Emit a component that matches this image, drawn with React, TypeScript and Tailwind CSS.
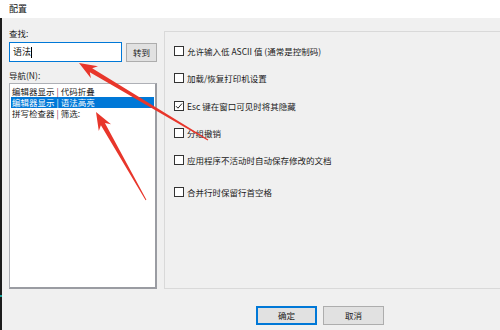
import React from "react";

type P = [number, number];

function arrowPoints(tip: P, tail: P): string {
  const [tx, ty] = tip;
  const [bx, by] = tail;
  const dx = tx - bx;
  const dy = ty - by;
  const len = Math.hypot(dx, dy);
  const ux = dx / len;
  const uy = dy / len;
  const px = -uy;
  const py = ux;
  const headLen = 18;
  const headW = 7;
  const neckW = 2.3;
  const tailW = 0.5;
  const barbIn = 4;
  const hx = tx - ux * headLen;
  const hy = ty - uy * headLen;
  const nx = tx - ux * (headLen - barbIn);
  const ny = ty - uy * (headLen - barbIn);
  const pts: P[] = [
    [tx, ty],
    [hx + px * headW, hy + py * headW],
    [nx + px * neckW, ny + py * neckW],
    [bx + px * tailW, by + py * tailW],
    [bx - px * tailW, by - py * tailW],
    [nx - px * neckW, ny - py * neckW],
    [hx - px * headW, hy - py * headW],
  ];
  return pts.map((p) => `${p[0].toFixed(1)},${p[1].toFixed(1)}`).join(" ");
}

function Checkbox({ checked }: { checked?: boolean }) {
  return (
    <div className="w-[10px] h-[10px] border border-[#333333] bg-white flex items-center justify-center shrink-0">
      {checked && (
        <svg width="8" height="8" viewBox="0 0 8 8">
          <path d="M1 4.2 L3 6.2 L7 1.5" stroke="#222" strokeWidth="1" fill="none" />
        </svg>
      )}
    </div>
  );
}

function Row({ label, checked, className }: { label: string; checked?: boolean; className?: string }) {
  return (
    <div className={"flex items-center gap-[3px] h-[10px] " + (className ?? "")}>
      <Checkbox checked={checked} />
      <span className="text-[8.5px] leading-[10px] text-[#1a1a1a] whitespace-nowrap">{label}</span>
    </div>
  );
}

function Item({ a, b, selected }: { a: string; b: string; selected?: boolean }) {
  return (
    <div
      className={
        "h-[11px] leading-[11px] px-[1px] text-[8.5px] whitespace-nowrap " +
        (selected ? "bg-[#0078d7] text-white" : "text-[#1a1a1a]")
      }
    >
      {a}
      <span className={selected ? "text-white" : "text-[#8a1c4c]"}> | </span>
      {b}
    </div>
  );
}

export default function App() {
  return (
    <div className="w-[500px] h-[330px] relative overflow-hidden bg-[#f0f0f0] font-['Noto_Sans_CJK_SC','Microsoft_YaHei',sans-serif] flex flex-col">
      <div className="h-[18px] bg-white pl-[9px] flex items-center text-[9px] text-[#111] shrink-0">配置</div>
      <div className="flex flex-1">
        <div className="w-[2px] bg-[#1c1c1c] flex flex-col">
          <div className="h-[277px]" />
          <div className="h-[2px] bg-[#1aa39a]" />
        </div>
        <div className="flex flex-col flex-1">
          <div className="flex">
            <div className="w-[148px] ml-[7px] flex flex-col">
              <div className="mt-[10px] h-[10px] leading-[10px] text-[8.5px] text-[#1a1a1a]">查找:</div>
              <div className="mt-[4px] flex items-start gap-[4px]">
                <div className="w-[113px] h-[20px] border border-[#0078d7] bg-white flex items-center pl-[3px]">
                  <span className="text-[9px] leading-[10px] text-[#111]">语法</span>
                  <span className="w-[1px] h-[11px] bg-black" />
                </div>
                <div className="mt-[1px] w-[31px] h-[19px] border border-[#adadad] bg-[#e1e1e1] flex items-center justify-center text-[8.5px] text-[#1a1a1a]">
                  转到
                </div>
              </div>
              <div className="mt-[8px] h-[10px] leading-[10px] text-[8.5px] text-[#1a1a1a]">导航(N):</div>
              <div className="mt-[3px] h-[206px] border border-[#aeb0b6] border-r-[#9a9ca2] border-b-[#9a9ca2] border-r-2 border-b-2 bg-white pt-[2px] px-[1px]">
                <Item a="编辑器显示" b="代码折叠" />
                <Item a="编辑器显示" b="语法高亮" selected />
                <Item a="拼写检查器" b="筛选:" />
              </div>
            </div>
            <div className="ml-[7px] mt-[13px] h-[258px] flex-1 -mr-[4px] border border-[#d9d9d9] bg-[#f0f0f0] pl-[9px] pt-[14px] flex flex-col">
              <Row label="允许输入低 ASCII 值 (通常是控制码)" />
              <Row className="mt-[17px]" label="加载/恢复打印机设置" />
              <Row className="mt-[18px]" label="Esc 键在窗口可见时将其隐藏" checked />
              <Row className="mt-[17px]" label="分组撤销" />
              <Row className="mt-[17px]" label="应用程序不活动时自动保存修改的文档" />
              <Row className="mt-[22px]" label="合并行时保留行首空格" />
            </div>
          </div>
          <div className="mt-[17px] flex gap-[6px] pl-[254px]">
            <div className="w-[61px] h-[19px] border-2 border-[#0078d7] bg-[#e1e1e1] flex items-center justify-center text-[8.5px] text-[#1a1a1a]">
              确定
            </div>
            <div className="w-[61px] h-[19px] border border-[#adadad] bg-[#e1e1e1] flex items-center justify-center text-[8.5px] text-[#1a1a1a]">
              取消
            </div>
          </div>
        </div>
      </div>
      <svg className="absolute inset-0 pointer-events-none" width="500" height="330" viewBox="0 0 500 330">
        <polygon points={arrowPoints([79, 63], [208, 140])} fill="#e8362b" />
        <polygon points={arrowPoints([96, 112], [146, 200])} fill="#e8362b" />
      </svg>
    </div>
  );
}
